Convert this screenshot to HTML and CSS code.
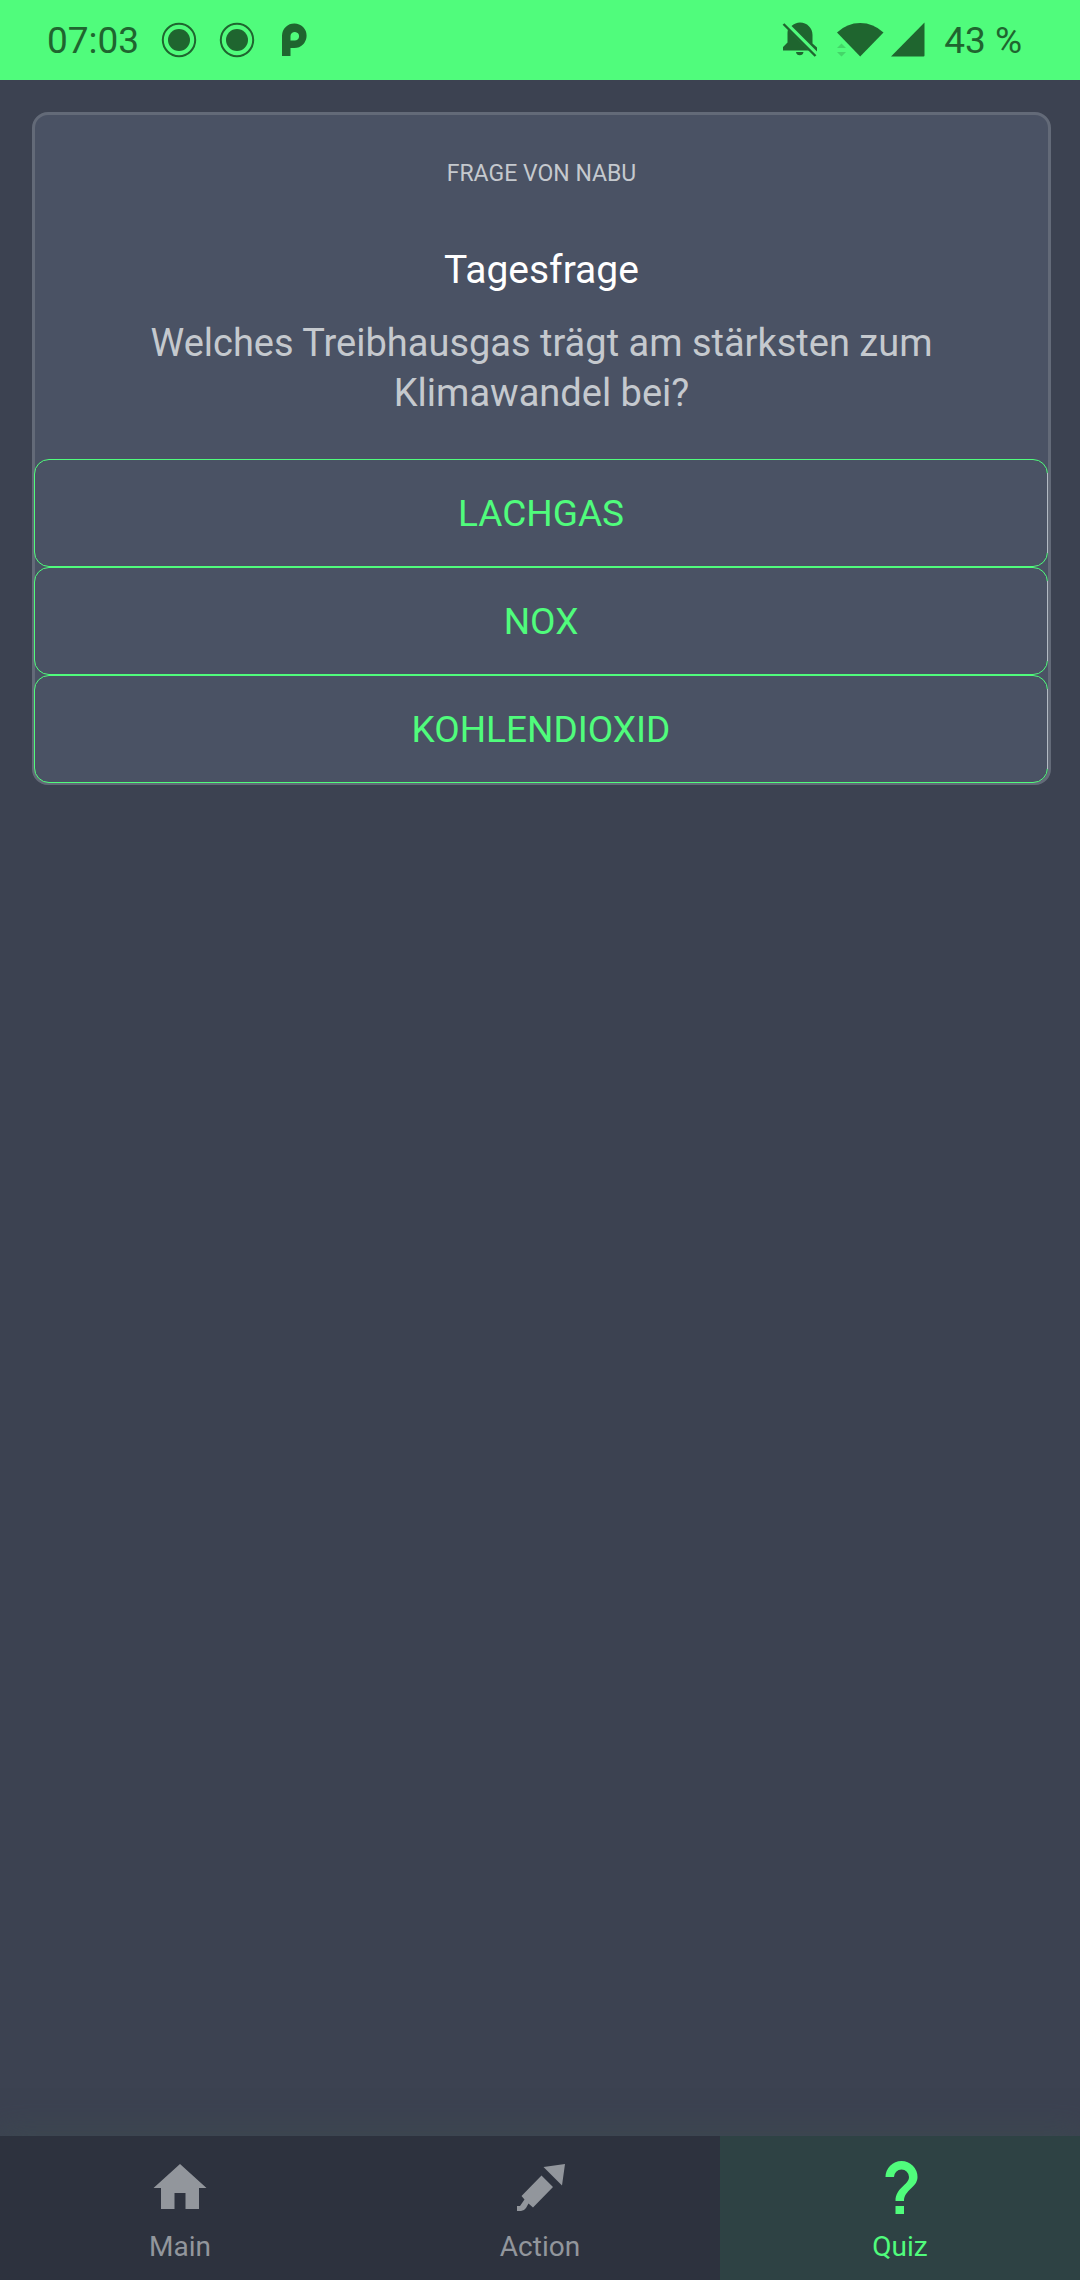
FILE: index.html
```html
<!DOCTYPE html>
<html lang="de">
<head>
<meta charset="utf-8">
<meta name="viewport" content="width=device-width, initial-scale=1">
<title>Quiz</title>
<link rel="stylesheet" href="styles.css">
</head>
<body>
<div class="app">
  <header class="status">
    <div class="status-left">
      <span class="clock">07:03</span>
      <svg class="dot" width="36" height="36" viewBox="0 0 36 36" aria-hidden="true"><circle cx="18" cy="18" r="16.2" fill="none" stroke="currentColor" stroke-width="2"/><circle cx="18" cy="18" r="11"/></svg>
      <svg class="dot" width="36" height="36" viewBox="0 0 36 36" aria-hidden="true"><circle cx="18" cy="18" r="16.2" fill="none" stroke="currentColor" stroke-width="2"/><circle cx="18" cy="18" r="11"/></svg>
      <svg class="brand" width="26" height="34" viewBox="0 0 26 34" aria-hidden="true"><path fill-rule="evenodd" d="M1 33V12.500A12.300 12.300 0 1 1 13.300 25H9.500V33ZM9.500 17.500H13.500A4.300 4.300 0 1 0 9.500 13Z"/></svg>
    </div>
    <div class="status-right">
      <svg class="bell" width="36" height="36" viewBox="0 0 36 36" aria-hidden="true"><path d="M9.500 4C12 1.800 15 .5 18 .5C25 .5 30.500 6 30.500 13V21.500L35 25.500V29.500ZM6 7.500L27 28.500H1V25L5.500 20.500V13C5.500 11 5.500 9 6 7.500ZM14 30H21.500A3.800 3.800 0 0 1 14 30Z"/><path d="M1.500 2L33.500 34" fill="none" stroke="currentColor" stroke-width="2.400"/></svg>
      <svg class="wifi" width="48" height="36" viewBox="0 0 48 36" aria-hidden="true"><path d="M1 10.500Q11 1 24.200 1T47.500 10.500L24.200 34.500Z"/><path opacity=".25" d="M1 26L5.500 21.500L10 26ZM1 30H10L5.500 34.500Z"/></svg>
      <svg class="signal" width="36" height="36" viewBox="0 0 36 36" aria-hidden="true"><path d="M34.500.5V33.500Q34.500 34.500 33.500 34.500H1Z"/></svg>
      <span class="battery">43 %</span>
    </div>
  </header>
  <main class="content">
    <section class="card">
      <p class="source">FRAGE VON NABU</p>
      <h1 class="title">Tagesfrage</h1>
      <p class="question">Welches Treibhausgas trägt am stärksten zum Klimawandel bei?</p>
      <div class="answers">
        <button class="answer" type="button">LACHGAS</button>
        <button class="answer" type="button">NOX</button>
        <button class="answer" type="button">KOHLENDIOXID</button>
      </div>
    </section>
  </main>
  <nav class="tabs">
    <a class="tab" href="#main">
      <svg class="tab-icon" width="56" height="56" viewBox="0 0 56 56" aria-hidden="true"><path d="M28 4L54.500 28H47V49H33.500V33H22.500V49H9V28H1.500Z"/></svg>
      <span>Main</span>
    </a>
    <a class="tab" href="#action">
      <svg class="tab-icon" width="56" height="56" viewBox="0 0 56 56" aria-hidden="true"><path d="M31.500 7L53 4L50 25.500ZM29.500 15.500L41 27L21 47.500L16.500 43.500L14 48Q12 51 9 51H5V46H8L12.500 39.500L9.500 36Z"/></svg>
      <span>Action</span>
    </a>
    <a class="tab tab-active" href="#quiz" aria-current="page">
      <svg class="tab-icon" width="56" height="56" viewBox="0 0 56 56" aria-hidden="true"><path d="M13.500 17A16 16 0 0 1 45.500 17C45.500 27.500 32 30 32 41H23.500C23.500 27.500 37 25 37 17A7.500 7.500 0 0 0 22 17ZM23.500 46H32V54H23.500Z"/></svg>
      <span>Quiz</span>
    </a>
  </nav>
</div>
</body>
</html>
```
FILE: styles.css
```css
* { box-sizing: border-box; }

body {
  margin: 0;
  background: #3c4251;
  color: #c5c9ce;
  font-family: Roboto, "Noto Sans", sans-serif;
}

svg { display: block; flex: none; fill: currentColor; }

.app {
  display: flex;
  flex-direction: column;
  min-height: 100vh;
}

.status {
  display: flex;
  justify-content: space-between;
  align-items: center;
  height: 80px;
  padding: 0 58px 0 47px;
  background: #50fc7c;
  color: #1f652f;
  font-size: 37px;
  line-height: 40px;
}

.status-left,
.status-right {
  display: flex;
  align-items: center;
}

.clock,
.battery { padding-top: 2px; }

.status-left { gap: 22px; }
.brand { margin-left: 4px; }
.wifi { margin-left: 18px; }
.signal { margin-left: 6px; }
.battery { margin-left: 18px; }

.content {
  flex: 1;
  padding: 32px 29px 32px 32px;
}

.card {
  border: 3px solid #636a78;
  border-radius: 16px;
  background: #4a5264;
  text-align: center;
}

.source {
  margin: 43px 0 0;
  font-size: 23px;
  line-height: 32px;
}

.title {
  margin: 54px 0 0;
  color: #fff;
  font-size: 39px;
  font-weight: 400;
  line-height: 52px;
}

.question {
  margin: 22px 96px 0;
  font-size: 38px;
  line-height: 50px;
}

.answers {
  display: flex;
  flex-direction: column;
  margin: 41px 0 -1px -1px;
}

.answer {
  position: relative;
  height: 108px;
  padding: 0;
  border: 1px solid #50fc7c;
  border-radius: 15px;
  background: none;
  color: #50fc7c;
  font: inherit;
  font-size: 37px;
}

/* pale highlight over the straight part of the right edge */
.answer::after {
  content: "";
  position: absolute;
  top: 13px;
  right: -1px;
  bottom: 13px;
  width: 1px;
  background: #b3bac3;
}

.tabs {
  display: grid;
  grid-template-columns: repeat(3, 1fr);
  background: #2d323e;
  box-shadow: 0 0 32px rgba(62, 84, 80, 0.5);
}

.tab {
  display: flex;
  flex-direction: column;
  align-items: center;
  gap: 15px;
  height: 144px;
  padding-top: 24px;
  color: #92969c;
  font-size: 28px;
  line-height: 32px;
  text-decoration: none;
}

.tab-active {
  background: #2e4244;
  color: #50fc7c;
}
```
